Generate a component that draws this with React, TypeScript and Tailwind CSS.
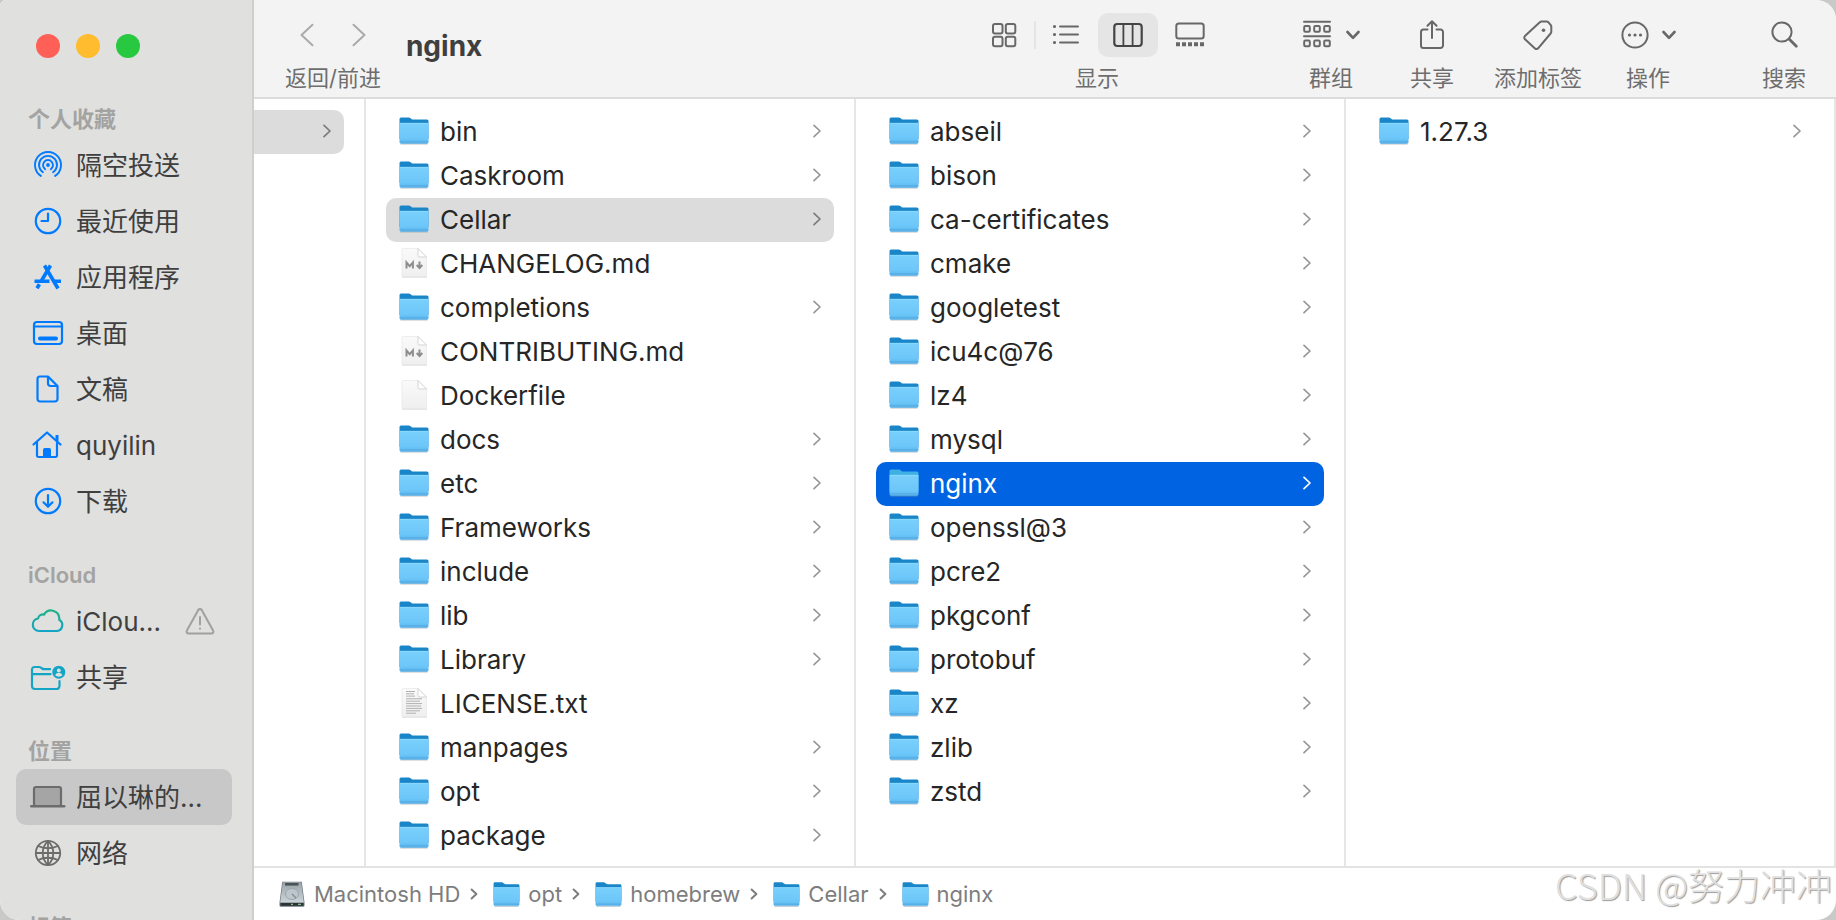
import type { ReactNode } from 'react';

type Kind = 'folder' | 'md' | 'blank' | 'txt';

interface Entry {
    name: string;
    kind?: Kind;
    active?: 'gray' | 'blue';
}

const homebrew: Entry[] = [
    { name: 'bin' },
    { name: 'Caskroom' },
    { name: 'Cellar', active: 'gray' },
    { name: 'CHANGELOG.md', kind: 'md' },
    { name: 'completions' },
    { name: 'CONTRIBUTING.md', kind: 'md' },
    { name: 'Dockerfile', kind: 'blank' },
    { name: 'docs' },
    { name: 'etc' },
    { name: 'Frameworks' },
    { name: 'include' },
    { name: 'lib' },
    { name: 'Library' },
    { name: 'LICENSE.txt', kind: 'txt' },
    { name: 'manpages' },
    { name: 'opt' },
    { name: 'package' },
];

const cellar: Entry[] = [
    { name: 'abseil' },
    { name: 'bison' },
    { name: 'ca-certificates' },
    { name: 'cmake' },
    { name: 'googletest' },
    { name: 'icu4c@76' },
    { name: 'lz4' },
    { name: 'mysql' },
    { name: 'nginx', active: 'blue' },
    { name: 'openssl@3' },
    { name: 'pcre2' },
    { name: 'pkgconf' },
    { name: 'protobuf' },
    { name: 'xz' },
    { name: 'zlib' },
    { name: 'zstd' },
];

const versions: Entry[] = [{ name: '1.27.3' }];

const path = ['opt', 'homebrew', 'Cellar', 'nginx'];

/* ---------- icons ---------- */

function Gradients() {
    return (
        <svg className="absolute h-0 w-0" aria-hidden="true">
            <defs>
                <linearGradient id="folder-front" x1="0" y1="0" x2="0" y2="1">
                    <stop offset="0" stopColor="#79d0fc" />
                    <stop offset="0.75" stopColor="#6cc6f8" />
                    <stop offset="1" stopColor="#58b2ea" />
                </linearGradient>
                <linearGradient id="page-fill" x1="0" y1="0" x2="0" y2="1">
                    <stop offset="0" stopColor="#fafafa" />
                    <stop offset="1" stopColor="#efefef" />
                </linearGradient>
                <linearGradient id="disk-fill" x1="0" y1="0" x2="0" y2="1">
                    <stop offset="0" stopColor="#9aa5aa" />
                    <stop offset="1" stopColor="#c9d3d8" />
                </linearGradient>
                <linearGradient id="cloud-stroke" x1="0" y1="0" x2="0" y2="1">
                    <stop offset="0" stopColor="#1fb08a" />
                    <stop offset="1" stopColor="#14a5c4" />
                </linearGradient>
            </defs>
        </svg>
    );
}

function FolderIcon({ small = false, tinted = false }: { small?: boolean; tinted?: boolean }) {
    return (
        <svg viewBox="0 0 30 28" className={small ? 'h-[25px] w-[27px] shrink-0' : 'h-7 w-[30px] shrink-0'} aria-hidden="true">
            <path d="M2 26.9h26" stroke="#8b9aa5" strokeWidth="1.4" opacity="0.6" strokeLinecap="round" />
            <path d="M.5 2A1.6 1.6 0 0 1 2.1.4h7.5c.9 0 1.4.3 2.1.9l.8.7c.5.4 1 .5 1.7.5H28a1.5 1.5 0 0 1 1.5 1.5V22H.5z" fill={tinted ? '#3fb0e4' : '#1a86c8'} />
            <path d="M.5 5.9h29V25a1.7 1.7 0 0 1-1.7 1.7H2.2A1.7 1.7 0 0 1 .5 25z" fill="url(#folder-front)" />
            <path d="M1 6.3h28" stroke="#8fdcff" strokeWidth="0.8" />
            <path d="M.8 24.8h28.4" stroke="#4ba4dc" strokeWidth="0.8" opacity="0.7" />
        </svg>
    );
}

function PageIcon({ kind }: { kind: Kind }) {
    return (
        <svg viewBox="0 0 30 30" className="h-[30px] w-[30px] shrink-0" aria-hidden="true">
            <path d="M3.5 29h24" stroke="#bdbdbd" strokeWidth="1.2" opacity="0.7" strokeLinecap="round" />
            <path d="M3 2A1.5 1.5 0 0 1 4.5.5H19L27.5 9v18a1.5 1.5 0 0 1-1.5 1.5H4.5A1.5 1.5 0 0 1 3 27z" fill="url(#page-fill)" stroke="#e6e6e6" strokeWidth="0.7" />
            <path d="M19 .5V7.5A1.5 1.5 0 0 0 20.5 9h7z" fill="#fff" stroke="#cfcfcf" strokeWidth="0.9" />
            {kind === 'md' && (
                <g fill="none" stroke="#8d8d8d" strokeWidth="2">
                    <path d="M7.5 20.5v-6l3.2 3.7 3.2-3.7v6" />
                    <path d="M20.5 13.5v6M17.7 17l2.8 3 2.8-3" />
                </g>
            )}
            {kind === 'txt' && (
                <path
                    d="M7 3.5h9M7 5.8h8M7 8.1h9M7 10.8h16M7 13.2h14M7 15.6h16M7 18h15M7 20.4h16M7 22.8h14M7 25.2h10"
                    stroke="#b0b0b0"
                    strokeWidth="1"
                />
            )}
        </svg>
    );
}

function DiskIcon() {
    return (
        <svg viewBox="0 0 26 26" className="h-[26px] w-[26px] shrink-0" aria-hidden="true">
            <path d="M3.2.8h19.6l2.7 20.7v3a1.2 1.2 0 0 1-1.2 1.2H1.7a1.2 1.2 0 0 1-1.2-1.2v-3z" fill="#6f7a80" />
            <path d="M3.8 1.2h18.4l2.6 20.3H1.2z" fill="url(#disk-fill)" />
            <path d="M6 2h13.5v2.6H6z" fill="#4b5357" />
            <ellipse cx="13" cy="13" rx="6.5" ry="5.5" fill="#bcc6cb" stroke="#94a0a6" strokeWidth="0.8" />
            <path d="M13 13l4 4" stroke="#7d888e" strokeWidth="1.1" />
            <path d="M1.5 22h23v2.8h-23z" fill="#2e3336" />
            <path d="M12 23.3h2M19 23.3h3" stroke="#9fe0a8" strokeWidth="1" />
        </svg>
    );
}

function Chevron({ className }: { className: string }) {
    return (
        <svg viewBox="0 0 10 14" className={className} fill="none" stroke="currentColor" strokeLinecap="round" strokeLinejoin="round" aria-hidden="true">
            <path d="M2 1.3 8 7l-6 5.7" />
        </svg>
    );
}

function NavArrow({ back = false }: { back?: boolean }) {
    return (
        <svg viewBox="0 0 14 24" className="h-6 w-[14px]" fill="none" stroke="currentColor" strokeWidth="2" strokeLinecap="round" strokeLinejoin="round" aria-hidden="true">
            <path d={back ? 'M12.5 1.8 1.5 12l11 10.2' : 'M1.5 1.8 12.5 12l-11 10.2'} />
        </svg>
    );
}

function DownChevron() {
    return (
        <svg viewBox="0 0 14 10" className="h-[10px] w-[14px]" fill="none" stroke="currentColor" strokeWidth="2.6" strokeLinecap="round" strokeLinejoin="round" aria-hidden="true">
            <path d="M1.5 2 7 7.8 12.5 2" />
        </svg>
    );
}

function SideSvg({ children }: { children: ReactNode }) {
    return (
        <svg viewBox="0 0 36 32" className="h-8 w-9 shrink-0" fill="none" stroke="currentColor" strokeWidth="2.2" strokeLinecap="round" strokeLinejoin="round" aria-hidden="true">
            {children}
        </svg>
    );
}

const airdrop = (
    <SideSvg>
        <circle cx="18" cy="16" r="1.9" fill="currentColor" stroke="none" />
        <g strokeWidth="1.9">
            <path d="M15.2 20.2a5 5 0 1 1 5.6 0" />
            <path d="M12.9 23.3a9 9 0 1 1 10.2 0" />
            <path d="M10.9 26.9a13 13 0 1 1 14.2 0" />
        </g>
    </SideSvg>
);

const clock = (
    <SideSvg>
        <circle cx="18" cy="16" r="12.2" />
        <path d="M18 8.5V16h-6.5" />
    </SideSvg>
);

const apps = (
    <SideSvg>
        <g strokeWidth="3.6" strokeLinecap="butt">
            <path d="M14.5 4.5 28 27.5" />
            <path d="M20.5 4.5 11 20.5" />
            <path d="M4.5 20.2h15M24 20.2h7" />
            <path d="m9.4 23.3-2.4 4" />
        </g>
    </SideSvg>
);

const desktop = (
    <SideSvg>
        <rect x="4" y="5" width="28" height="22" rx="3" />
        <path d="M4.5 9.5h27" strokeWidth="1.8" />
        <path d="M10 21.5h16" strokeWidth="4" />
    </SideSvg>
);

const documents = (
    <SideSvg>
        <path d="M10 3.5h8l9.5 9.5v13a2.5 2.5 0 0 1-2.5 2.5H10A2.5 2.5 0 0 1 7.5 26V6A2.5 2.5 0 0 1 10 3.5z" />
        <path d="M18 4v6.5a2.5 2.5 0 0 0 2.5 2.5h6.5" />
    </SideSvg>
);

const home = (
    <SideSvg>
        <path d="M3.5 15.5 17 3.5l13.5 12" />
        <path d="M7 13v13.5A1.5 1.5 0 0 0 8.5 28h17a1.5 1.5 0 0 0 1.5-1.5V13" />
        <path d="M27 6v6" strokeWidth="3" strokeLinecap="butt" />
        <path d="M13.5 28v-7.5a1 1 0 0 1 1-1h5a1 1 0 0 1 1 1V28z" fill="currentColor" strokeWidth="1" />
    </SideSvg>
);

const downloads = (
    <SideSvg>
        <circle cx="18" cy="16" r="12.2" />
        <path d="M18 10v11.5M13.5 17.3 18 21.8l4.5-4.5" />
    </SideSvg>
);

const cloud = (
    <SideSvg>
        <path
            d="M9 26a6.4 6.4 0 0 1-.9-12.7c.5-2.9 3.3-4.3 5.9-3.7a8.2 8.2 0 0 1 15.3 3.7c0 .6 0 1-.1 1.5a6 6 0 0 1-2.2 11.2z"
            stroke="url(#cloud-stroke)"
        />
    </SideSvg>
);

const shared = (
    <SideSvg>
        <path d="M29.5 20v5a3 3 0 0 1-3 3H5a3 3 0 0 1-3-3V8.5A2.5 2.5 0 0 1 4.5 6H9c1 0 1.5.3 2.3.9l.7.6c.7.5 1.2.7 2.2.7H20" />
        <path d="M2.5 13.2h18" />
        <circle cx="28.8" cy="11.2" r="6.5" fill="currentColor" stroke="none" />
        <circle cx="28.8" cy="9.4" r="1.9" fill="#e0e0de" stroke="none" />
        <path d="M25.3 14.5c.4-2 1.7-2.8 3.5-2.8s3.1.8 3.5 2.8c-1.9 1.5-5.1 1.5-7 0z" fill="#e0e0de" stroke="none" />
    </SideSvg>
);

const laptop = (
    <SideSvg>
        <rect x="4" y="6" width="27" height="19" rx="2" fill="#a5a5a5" />
        <path d="M1.2 25.3h33" strokeWidth="2.4" />
    </SideSvg>
);

const network = (
    <SideSvg>
        <g strokeWidth="1.8">
            <circle cx="18" cy="16" r="12.2" />
            <path d="M18 3.8c-7 7-7 17.4 0 24.4M18 3.8c7 7 7 17.4 0 24.4M18 3.8v24.4" />
            <path d="M5.8 16h24.4M8.2 9c5.6 3 14 3 19.6 0M8.2 23c5.6-3 14-3 19.6 0" />
        </g>
    </SideSvg>
);

/* ---------- sidebar ---------- */

interface Place {
    label: string;
    icon: ReactNode;
    color: string;
    active?: boolean;
    warning?: boolean;
}

const sections: { title: string; places: Place[] }[] = [
    {
        title: '个人收藏',
        places: [
            { label: '隔空投送', icon: airdrop, color: 'text-[#007aff]' },
            { label: '最近使用', icon: clock, color: 'text-[#007aff]' },
            { label: '应用程序', icon: apps, color: 'text-[#007aff]' },
            { label: '桌面', icon: desktop, color: 'text-[#007aff]' },
            { label: '文稿', icon: documents, color: 'text-[#007aff]' },
            { label: 'quyilin', icon: home, color: 'text-[#007aff]' },
            { label: '下载', icon: downloads, color: 'text-[#007aff]' },
        ],
    },
    {
        title: 'iCloud',
        places: [
            { label: 'iClou...', icon: cloud, color: 'text-[#14a5c4]', warning: true },
            { label: '共享', icon: shared, color: 'text-[#14a5c4]' },
        ],
    },
    {
        title: '位置',
        places: [
            { label: '屈以琳的...', icon: laptop, color: 'text-[#6c6c6c]', active: true },
            { label: '网络', icon: network, color: 'text-[#6c6c6c]' },
        ],
    },
    { title: '标签', places: [] },
];

function Sidebar() {
    return (
        <aside className="w-[254px] shrink-0 overflow-hidden border-r-2 border-[#cfcfcd] bg-[#e0e0de]">
            <div className="flex h-[73px] gap-4 pt-[34px] pl-9">
                <button aria-label="关闭" className="h-6 w-6 rounded-full bg-[#fe5f57]" />
                <button aria-label="最小化" className="h-6 w-6 rounded-full bg-[#febc2e]" />
                <button aria-label="缩放" className="h-6 w-6 rounded-full bg-[#28c840]" />
            </div>
            {sections.map((section) => (
                <section key={section.title}>
                    <h2 className="h-16 pt-[29px] pl-7 text-[22px] leading-[34px] font-semibold text-[#a3a3a2]">{section.title}</h2>
                    <ul className="pr-5 pl-4">
                        {section.places.map((place) => (
                            <li key={place.label}>
                                <a
                                    href="#"
                                    className={`flex h-14 items-center gap-[10px] rounded-[10px] pr-[17px] pl-[14px] text-[26px] ${place.active ? 'bg-[#c8c8c8]' : ''}`}
                                >
                                    <span className={place.color}>{place.icon}</span>
                                    <span className="whitespace-nowrap text-[#3f3f3f]">{place.label}</span>
                                    {place.warning && (
                                        <svg viewBox="0 0 30 28" className="ml-auto h-7 w-[30px]" fill="none" stroke="#a0a0a0" strokeWidth="2" strokeLinecap="round" strokeLinejoin="round" aria-label="警告">
                                            <path d="M13.3 2.9 1.9 23.5A1.9 1.9 0 0 0 3.5 26.5h23a1.9 1.9 0 0 0 1.6-3L16.7 2.9a2 2 0 0 0-3.4 0z" />
                                            <path d="M15 10v7.5M15 21.5v.3" />
                                        </svg>
                                    )}
                                </a>
                            </li>
                        ))}
                    </ul>
                </section>
            ))}
        </aside>
    );
}

/* ---------- toolbar ---------- */

function ToolItem({ label, children }: { label: string; children: ReactNode }) {
    return (
        <div className="flex flex-col items-center gap-[7px]">
            <div className="flex h-[44px] items-center">{children}</div>
            <span className="text-[22px] leading-7 whitespace-nowrap text-[#6e6e6e]">{label}</span>
        </div>
    );
}

function ToolSvg({ children }: { children: ReactNode }) {
    return (
        <svg viewBox="0 0 30 30" className="h-[30px] w-[30px]" fill="none" stroke="currentColor" strokeWidth="2" strokeLinecap="round" strokeLinejoin="round" aria-hidden="true">
            {children}
        </svg>
    );
}

function Toolbar() {
    return (
        <header className="flex h-[99px] shrink-0 items-start border-b-2 border-[#dcdcdc] bg-[#f3f3f3] pt-[13px] pr-[30px] pl-[31px] text-[#686868]">
            <ToolItem label="返回/前进">
                <div className="flex gap-[38px] text-[#aaa]">
                    <button aria-label="返回">
                        <NavArrow back />
                    </button>
                    <button aria-label="前进">
                        <NavArrow />
                    </button>
                </div>
            </ToolItem>
            <h1 className="ml-[25px] pt-[13px] text-[28px] leading-10 font-bold text-[#3f3f3f]">nginx</h1>

            <div className="ml-auto flex">
                <ToolItem label="显示">
                    <button aria-label="图标" className="flex h-[44px] w-[60px] items-center justify-center">
                        <ToolSvg>
                            <rect x="4" y="4" width="9.5" height="9.5" rx="2" />
                            <rect x="16.8" y="4" width="9.5" height="9.5" rx="2" />
                            <rect x="4" y="16.8" width="9.5" height="9.5" rx="2" />
                            <rect x="16.8" y="16.8" width="9.5" height="9.5" rx="2" />
                        </ToolSvg>
                    </button>
                    <span className="h-7 w-[2px] bg-[#e5e5e5]" />
                    <button aria-label="列表" className="mr-[2px] flex h-[44px] w-[60px] items-center justify-center">
                        <ToolSvg>
                            <path d="M9 6.5h18M9 14.5h18M9 22.5h18" />
                            <path d="M3.5 6.5h.01M3.5 14.5h.01M3.5 22.5h.01" strokeWidth="3.2" />
                        </ToolSvg>
                    </button>
                    <button aria-label="分栏" className="mr-[2px] flex h-[44px] w-[60px] items-center justify-center rounded-[10px] bg-[#e5e5e5] text-[#454545]">
                        <ToolSvg>
                            <rect x="1.3" y="4" width="27.4" height="22" rx="3" strokeWidth="2.2" />
                            <path d="M10.4 4v22M19.6 4v22" strokeWidth="1.8" />
                        </ToolSvg>
                    </button>
                    <button aria-label="画廊" className="flex h-[44px] w-[60px] items-center justify-center">
                        <ToolSvg>
                            <rect x="1.3" y="3.5" width="27.4" height="15" rx="2.5" />
                            <path d="M1 24.2h28" strokeWidth="4" strokeLinecap="butt" strokeDasharray="4 2" />
                        </ToolSvg>
                    </button>
                </ToolItem>
                <div className="ml-[82px]">
                    <ToolItem label="群组">
                        <button aria-label="群组" className="flex items-center gap-[14px]">
                            <ToolSvg>
                                <path d="M2 1.8h26M2 16.2h26" />
                                <rect x="2.2" y="6" width="5.6" height="5.8" rx="1.2" />
                                <rect x="12.2" y="6" width="5.6" height="5.8" rx="1.2" />
                                <rect x="22.2" y="6" width="5.6" height="5.8" rx="1.2" />
                                <rect x="2.2" y="20.5" width="5.6" height="5.8" rx="1.2" />
                                <rect x="12.2" y="20.5" width="5.6" height="5.8" rx="1.2" />
                                <rect x="22.2" y="20.5" width="5.6" height="5.8" rx="1.2" />
                            </ToolSvg>
                            <DownChevron />
                        </button>
                    </ToolItem>
                </div>
                <div className="ml-[50px]">
                    <ToolItem label="共享">
                        <button aria-label="共享">
                            <ToolSvg>
                                <path d="M10.5 9.5H6.5a2.5 2.5 0 0 0-2.5 2.5v13.5A2.5 2.5 0 0 0 6.5 28h17a2.5 2.5 0 0 0 2.5-2.5V12a2.5 2.5 0 0 0-2.5-2.5h-4" />
                                <path d="M15 18V1.5M10.5 5.8 15 1.3l4.5 4.5" />
                            </ToolSvg>
                        </button>
                    </ToolItem>
                </div>
                <div className="ml-10">
                    <ToolItem label="添加标签">
                        <button aria-label="添加标签">
                            <ToolSvg>
                                <path d="M16.8 2.2a2.5 2.5 0 0 1 1.7-.7h5a2.5 2.5 0 0 1 2 .9l2.3 2.8a2.5 2.5 0 0 1 .5 1.6v5a2.5 2.5 0 0 1-.7 1.7L15.1 28.3a2.2 2.2 0 0 1-3.1.1L2 19.3a2.2 2.2 0 0 1-.1-3.2z" />
                                <circle cx="20.5" cy="10.2" r="1.8" fill="currentColor" stroke="none" />
                            </ToolSvg>
                        </button>
                    </ToolItem>
                </div>
                <div className="ml-[38px]">
                    <ToolItem label="操作">
                        <button aria-label="操作" className="flex items-center gap-3">
                            <ToolSvg>
                                <circle cx="15" cy="15" r="12.6" />
                                <path d="M9.5 15h.01M15 15h.01M20.5 15h.01" strokeWidth="3.2" />
                            </ToolSvg>
                            <DownChevron />
                        </button>
                    </ToolItem>
                </div>
                <div className="ml-[86px]">
                    <ToolItem label="搜索">
                        <button aria-label="搜索">
                            <ToolSvg>
                                <circle cx="13" cy="12" r="9.6" />
                                <path d="m20.3 19.3 7 7" strokeWidth="2.8" />
                            </ToolSvg>
                        </button>
                    </ToolItem>
                </div>
            </div>
        </header>
    );
}

/* ---------- columns ---------- */

function Row({ entry }: { entry: Entry }) {
    const kind = entry.kind ?? 'folder';
    const bg = entry.active === 'blue' ? 'bg-[#0063e1] text-white' : entry.active === 'gray' ? 'bg-[#dcdcdc] text-[#262626]' : 'text-[#262626]';
    const arrow = entry.active === 'blue' ? 'text-white' : entry.active === 'gray' ? 'text-[#7a7a7a]' : 'text-[#969696]';

    return (
        <li>
            <a href="#" className={`flex h-11 items-center rounded-[10px] pr-3 pb-[2px] pl-[13px] text-[26px] ${bg}`}>
                {kind === 'folder' ? <FolderIcon tinted={entry.active === 'blue'} /> : <PageIcon kind={kind} />}
                <span className="ml-[11px]">{entry.name}</span>
                {kind === 'folder' && <Chevron className={`ml-auto h-[14px] w-[10px] stroke-[1.7] ${arrow}`} />}
            </a>
        </li>
    );
}

function Column({ entries }: { entries: Entry[] }) {
    return (
        <ul className="min-w-0 flex-1 border-r-2 border-[#e6e6e6] px-5 pt-[11px]">
            {entries.map((entry) => (
                <Row key={entry.name} entry={entry} />
            ))}
        </ul>
    );
}

function PathBar() {
    return (
        <nav className="flex h-[54px] shrink-0 items-center border-t-2 border-[#e3e3e3] pl-[25px] text-[22px] text-[#7d7d7d]">
            <DiskIcon />
            <a href="#" className="ml-[9px]">Macintosh HD</a>
            {path.map((name) => (
                <span key={name} className="flex items-center">
                    <Chevron className="mr-[15px] ml-[10px] h-3 w-2 stroke-[2.5]" />
                    <FolderIcon small />
                    <a href="#" className="ml-2">{name}</a>
                </span>
            ))}
        </nav>
    );
}

export default function App() {
    return (
        <div className="relative flex h-screen overflow-hidden bg-[#c9c9c9] font-['Inter','Noto_Sans_CJK_SC',sans-serif]">
            <Gradients />
            <div className="flex min-w-0 flex-1 overflow-hidden rounded-[20px] rounded-tl-[6px] bg-white">
                <Sidebar />
                <div className="flex min-w-0 flex-1 flex-col">
                    <Toolbar />
                    <main className="flex min-h-0 flex-1 overflow-hidden">
                        <div className="w-[112px] shrink-0 border-r-2 border-[#e6e6e6] pt-[11px] pr-5">
                            <a href="#" aria-label="上一级" className="flex h-11 items-center justify-end rounded-r-[10px] bg-[#dcdcdc] pr-3 pb-[2px] text-[#7a7a7a]">
                                <Chevron className="h-[14px] w-[10px] stroke-[1.7]" />
                            </a>
                        </div>
                        <Column entries={homebrew} />
                        <Column entries={cellar} />
                        <Column entries={versions} />
                    </main>
                    <PathBar />
                </div>
            </div>
            <p className="absolute right-1 bottom-3 font-['Noto_Sans_CJK_SC',sans-serif] text-[36px] leading-[48px] font-light text-[#e0e0e0] [text-shadow:1px_1px_1px_#999]">
                CSDN @努力冲冲
            </p>
        </div>
    );
}
